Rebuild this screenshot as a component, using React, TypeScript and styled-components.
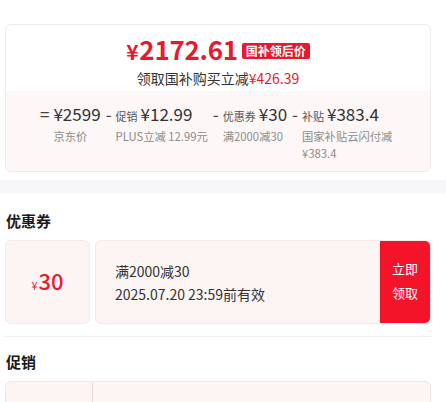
import styled, { createGlobalStyle } from 'styled-components';

const GlobalStyle = createGlobalStyle`
  html, body {
    margin: 0;
    padding: 0;
    overflow: hidden;
    background: #ffffff;
  }
  body {
    font-family: "Noto Sans CJK SC", "Noto Sans", sans-serif;
    color: #333333;
  }
`;

const RED = '#e8192c';
const BUTTON_RED = '#f31429';

const terms = [
  { op: '=', label: '', amount: '¥2599', sub: '京东价' },
  { op: '-', label: '促销', amount: '¥12.99', sub: 'PLUS立减 12.99元' },
  { op: '-', label: '优惠券', amount: '¥30', sub: '满2000减30' },
  { op: '-', label: '补贴', amount: '¥383.4', sub: '国家补贴云闪付减¥383.4' },
];

const App = () => {
  return (
    <>
      <GlobalStyle />
      <TopSection>
        <PriceCard>
          <PriceHead>
            <PriceRow>
              <Price>
                <PriceYen>¥</PriceYen>2172.61
              </Price>
              <PriceTag>国补领后价</PriceTag>
            </PriceRow>
            <Saving>
              领取国补购买立减<SavingAmount>¥426.39</SavingAmount>
            </Saving>
          </PriceHead>
          <Breakdown>
            {terms.map((t, i) => (
              <Term key={t.amount} $last={i === terms.length - 1}>
                <Op>{t.op}</Op>
                <TermBody>
                  <TermTop>
                    {t.label && <TermLabel>{t.label}</TermLabel>}
                    <TermAmount>{t.amount}</TermAmount>
                  </TermTop>
                  <TermSub>{t.sub}</TermSub>
                </TermBody>
              </Term>
            ))}
          </Breakdown>
        </PriceCard>
      </TopSection>
      <Band />
      <Section>
        <SectionTitle>优惠券</SectionTitle>
        <CouponRow>
          <CouponValue>
            <CouponYen>¥</CouponYen>
            <CouponNumber>30</CouponNumber>
          </CouponValue>
          <CouponBody>
            <CouponInfo>
              <CouponLine>满2000减30</CouponLine>
              <CouponLine>2025.07.20 23:59前有效</CouponLine>
            </CouponInfo>
            <ClaimButton>
              立即
              <br />
              领取
            </ClaimButton>
          </CouponBody>
        </CouponRow>
        <Divider />
        <SectionTitle>促销</SectionTitle>
        <PromoBox>
          <PromoSide />
          <PromoMain />
        </PromoBox>
      </Section>
    </>
  );
};

export default App;

const TopSection = styled.div`
  padding: 24px 15px 8px 5px;
`;

const PriceCard = styled.div`
  border: 1px solid #efe9e9;
  border-radius: 6px;
  overflow: hidden;
  background: #ffffff;
`;

const PriceHead = styled.div`
  display: flex;
  flex-direction: column;
  align-items: center;
  padding: 10px 0 3px;
`;

const PriceRow = styled.div`
  display: flex;
  align-items: center;
  gap: 4px;
  height: 30px;
`;

const Price = styled.div`
  color: ${RED};
  font-size: 26px;
  font-weight: 700;
  line-height: 30px;
  letter-spacing: -0.3px;
`;

const PriceYen = styled.span`
  font-size: 21px;
  margin-right: 1px;
`;

const PriceTag = styled.div`
  background: ${RED};
  color: #ffffff;
  font-size: 12px;
  font-weight: 700;
  line-height: 16px;
  padding: 0 4px;
  border-radius: 2px;
  margin-top: 1px;
`;

const Saving = styled.div`
  margin-top: 3px;
  font-size: 14px;
  line-height: 20px;
  color: #333333;
`;

const SavingAmount = styled.span`
  color: ${RED};
`;

const Breakdown = styled.div`
  display: flex;
  justify-content: center;
  gap: 5px;
  padding: 11px 30px 9px 34px;
  background: #fdf7f7;
`;

const Term = styled.div<{ $last?: boolean }>`
  display: flex;
  align-items: flex-start;
  flex-shrink: ${(p) => (p.$last ? 1 : 0)};
  min-width: 0;
`;

const Op = styled.span`
  font-size: 17px;
  line-height: 24px;
  color: #444444;
  margin-right: 4px;
`;

const TermBody = styled.div`
  display: flex;
  flex-direction: column;
  min-width: 0;
`;

const TermTop = styled.div`
  display: flex;
  align-items: baseline;
  gap: 3px;
  height: 24px;
`;

const TermLabel = styled.span`
  font-size: 11px;
  color: #555555;
  white-space: nowrap;
`;

const TermAmount = styled.span`
  font-size: 17px;
  line-height: 24px;
  color: #333333;
  white-space: nowrap;
`;

const TermSub = styled.div`
  margin-top: 2px;
  font-size: 11.3px;
  line-height: 17px;
  color: #8c8c8c;
`;

const Band = styled.div`
  height: 13px;
  background: #f6f6fb;
`;

const Section = styled.div`
  padding: 17px 15px 0 5px;
`;

const SectionTitle = styled.div`
  font-size: 15px;
  font-weight: 700;
  line-height: 22px;
  color: #1a1a1a;
  padding-left: 1px;
`;

const CouponRow = styled.div`
  display: flex;
  gap: 5px;
  height: 84px;
  margin-top: 8px;
`;

const CouponValue = styled.div`
  width: 85px;
  flex-shrink: 0;
  display: flex;
  align-items: baseline;
  justify-content: center;
  padding-top: 27px;
  box-sizing: border-box;
  background: #fdf4f4;
  border: 1px solid #f5e9e9;
  border-radius: 6px;
  color: ${RED};
`;

const CouponYen = styled.span`
  font-size: 11px;
  margin-right: 1px;
`;

const CouponNumber = styled.span`
  font-size: 22px;
  font-weight: 500;
  line-height: 24px;
`;

const CouponBody = styled.div`
  flex: 1;
  display: flex;
  background: #fdf4f4;
  border: 1px solid #f5e9e9;
  border-radius: 6px;
  overflow: hidden;
`;

const CouponInfo = styled.div`
  flex: 1;
  display: flex;
  flex-direction: column;
  justify-content: center;
  gap: 3px;
  padding-left: 19px;
`;

const CouponLine = styled.div`
  font-size: 14px;
  line-height: 20px;
  color: #333333;
`;

const ClaimButton = styled.div`
  width: 50px;
  display: flex;
  align-items: center;
  justify-content: center;
  text-align: center;
  padding-bottom: 3px;
  box-sizing: border-box;
  background: ${BUTTON_RED};
  color: #ffffff;
  font-size: 13px;
  line-height: 24px;
`;

const Divider = styled.div`
  height: 1px;
  background: #f0f0f0;
  margin: 12px 0 14px;
`;

const PromoBox = styled.div`
  display: flex;
  height: 84px;
  margin-top: 8px;
  background: #fdf4f4;
  border: 1px solid #f2e6e6;
  border-radius: 6px;
`;

const PromoSide = styled.div`
  width: 86px;
  border-right: 1px solid #ecdcdc;
`;

const PromoMain = styled.div`
  flex: 1;
`;
